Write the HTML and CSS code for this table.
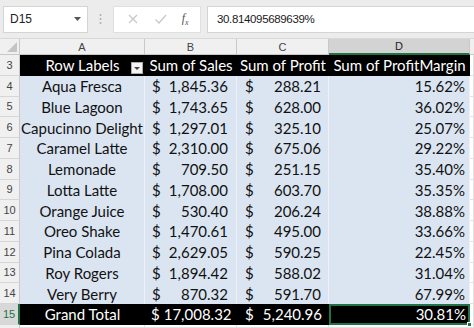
FILE: index.html
```html
<!DOCTYPE html>
<html>
<head>
<meta charset="utf-8">
<link rel="stylesheet" href="styles.css">
</head>
<body>
<div class="app">
  <div class="fbar">
    <div class="namebox"><span class="ref">D15</span><svg class="nb-arrow" width="7" height="4" viewBox="0 0 7 4"><path d="M0 0h7L3.5 4z" fill="#555"/></svg></div>
    <div class="dots"><svg width="3" height="12" viewBox="0 0 3 12"><circle cx="1.5" cy="2" r="1" fill="#b0b0b0"/><circle cx="1.5" cy="6" r="1" fill="#b0b0b0"/><circle cx="1.5" cy="10" r="1" fill="#b0b0b0"/></svg></div>
    <div class="fnbox">
      <svg class="ic" width="12" height="12" viewBox="0 0 12 12"><path d="M2 2l8 8M10 2l-8 8" stroke="#c8c8c8" stroke-width="1.3" fill="none"/></svg>
      <svg class="ic" width="13" height="12" viewBox="0 0 13 12"><path d="M1.5 6.5l3.5 3.5 7-8" stroke="#c8c8c8" stroke-width="1.3" fill="none"/></svg>
      <span class="fx">f<sub>x</sub></span>
    </div>
    <div class="input">30.814095689639%</div>
  </div>
  <div class="sheet">
    <div class="corner"><svg width="10" height="10" viewBox="0 0 10 10"><path d="M10 0V10H0z" fill="#c4c4c4"/></svg></div>
    <div class="ch">A</div><div class="ch">B</div><div class="ch">C</div><div class="ch sel">D</div><div class="ch fill"></div>

    <div class="rh">3</div>
    <div class="hd ca">Row Labels<span class="dd"><svg width="6" height="3" viewBox="0 0 6 3"><path d="M0 0h6L3 3z" fill="#444"/></svg></span></div>
    <div class="hd">Sum of Sales</div>
    <div class="hd">Sum of Profit</div>
    <div class="hd">Sum of ProfitMargin</div>
    <div class="blank"></div>

    <div class="rh">4</div><div class="c ca">Aqua Fresca</div><div class="c m"><span>$</span><span>1,845.36</span></div><div class="c m mc"><span>$</span><span>288.21</span></div><div class="c cd">15.62%</div><div class="blank"></div>
    <div class="rh">5</div><div class="c ca">Blue Lagoon</div><div class="c m"><span>$</span><span>1,743.65</span></div><div class="c m mc"><span>$</span><span>628.00</span></div><div class="c cd">36.02%</div><div class="blank"></div>
    <div class="rh">6</div><div class="c ca">Capucinno Delight</div><div class="c m"><span>$</span><span>1,297.01</span></div><div class="c m mc"><span>$</span><span>325.10</span></div><div class="c cd">25.07%</div><div class="blank"></div>
    <div class="rh">7</div><div class="c ca">Caramel Latte</div><div class="c m"><span>$</span><span>2,310.00</span></div><div class="c m mc"><span>$</span><span>675.06</span></div><div class="c cd">29.22%</div><div class="blank"></div>
    <div class="rh">8</div><div class="c ca">Lemonade</div><div class="c m"><span>$</span><span>709.50</span></div><div class="c m mc"><span>$</span><span>251.15</span></div><div class="c cd">35.40%</div><div class="blank"></div>
    <div class="rh">9</div><div class="c ca">Lotta Latte</div><div class="c m"><span>$</span><span>1,708.00</span></div><div class="c m mc"><span>$</span><span>603.70</span></div><div class="c cd">35.35%</div><div class="blank"></div>
    <div class="rh">10</div><div class="c ca">Orange Juice</div><div class="c m"><span>$</span><span>530.40</span></div><div class="c m mc"><span>$</span><span>206.24</span></div><div class="c cd">38.88%</div><div class="blank"></div>
    <div class="rh">11</div><div class="c ca">Oreo Shake</div><div class="c m"><span>$</span><span>1,470.61</span></div><div class="c m mc"><span>$</span><span>495.00</span></div><div class="c cd">33.66%</div><div class="blank"></div>
    <div class="rh">12</div><div class="c ca">Pina Colada</div><div class="c m"><span>$</span><span>2,629.05</span></div><div class="c m mc"><span>$</span><span>590.25</span></div><div class="c cd">22.45%</div><div class="blank"></div>
    <div class="rh">13</div><div class="c ca">Roy Rogers</div><div class="c m"><span>$</span><span>1,894.42</span></div><div class="c m mc"><span>$</span><span>588.02</span></div><div class="c cd">31.04%</div><div class="blank"></div>
    <div class="rh">14</div><div class="c ca">Very Berry</div><div class="c m"><span>$</span><span>870.32</span></div><div class="c m mc"><span>$</span><span>591.70</span></div><div class="c cd">67.99%</div><div class="blank"></div>

    <div class="rh rsel">15</div>
    <div class="t ca">Grand Total</div>
    <div class="t m tb"><span>$</span><span>17,008.32</span></div>
    <div class="t m mc"><span>$</span><span>5,240.96</span></div>
    <div class="t cd active">30.81%<span class="handle"></span></div>
    <div class="blank"></div>

    <div class="rh last"></div><div class="blank"></div><div class="blank"></div><div class="blank"></div><div class="blank"></div><div class="blank"></div>
  </div>
</div>
</body>
</html>
```
FILE: styles.css
```css
* { box-sizing: border-box; }
html, body { margin: 0; padding: 0; }
body { width: 474px; height: 328px; overflow: hidden; background: #fff; }
.app { width: 474px; height: 328px; display: flex; flex-direction: column; }

.fbar {
  height: 39px;
  background: #ececec;
  display: flex;
  align-items: center;
  padding: 0 0 0 3px;
  border-bottom: 1px solid #d8d8d8;
}
.namebox {
  width: 85px; height: 27px;
  background: #fff;
  border: 1px solid #d4d4d4;
  display: flex; align-items: center; justify-content: space-between;
  padding: 0 6px 0 6px;
  font-family: "Liberation Sans", Arial, sans-serif;
  font-size: 12px; color: #222;
}
.dots { width: 25px; display: flex; justify-content: center; }
.fnbox {
  width: 88px; height: 27px;
  background: #fff;
  border: 1px solid #e0e0e0;
  display: flex; align-items: center; justify-content: space-around;
  padding: 0 4px 0 6px;
}
.fx {
  font-family: "Liberation Serif", serif; font-style: italic;
  font-size: 12px; color: #555;
}
.fx sub { font-size: 8px; }
.input {
  flex: 1; height: 27px; margin-left: 6px;
  background: #fff;
  border: 1px solid #d4d4d4; border-right: none;
  display: flex; align-items: center;
  padding-left: 9px;
  font-family: "Liberation Sans", Arial, sans-serif;
  font-size: 11.5px; color: #1a1a1a; letter-spacing: -0.35px;
}

.sheet {
  flex: 1;
  display: grid;
  grid-template-columns: 20px 125px 92px 92px 141px 1fr;
  grid-template-rows: 16px repeat(13, 20.75px) 1fr;
  font-family: Lato, "Open Sans", sans-serif;
  font-size: 15px;
  background: #fff;
}
.corner {
  background: #f0f0f0;
  border-right: 1px solid #c8c8c8; border-bottom: 1px solid #c8c8c8;
  display: flex; align-items: flex-end; justify-content: flex-end;
  padding: 0 2px 2px 0;
}
.ch {
  background: #f0f0f0;
  border-right: 1px solid #c8c8c8; border-bottom: 1px solid #c8c8c8;
  display: flex; align-items: center; justify-content: center;
  font-family: "Liberation Sans", Arial, sans-serif;
  font-size: 11px; color: #444;
}
.ch.sel { background: #d3d3d3; border-bottom: 2px solid #217346; color: #222; }
.ch.fill { border-right: none; }
.rh {
  background: #f0f0f0;
  border-right: 1px solid #c8c8c8; border-bottom: 1px solid #d6d6d6;
  display: flex; align-items: center; justify-content: center;
  font-family: "Liberation Sans", Arial, sans-serif;
  font-size: 11px; color: #444;
}
.rh.rsel { background: #d8d8d8; color: #217346; border-right: 2px solid #217346; }
.rh.last { border-bottom: none; }
.blank { background: #fff; border-right: 1px solid #e2e2e2; border-bottom: 1px solid #e2e2e2; }

.hd {
  background: #000; color: #fff;
  display: flex; align-items: center; justify-content: center;
  white-space: nowrap;
}
.hd.ca { position: relative; }
.dd {
  position: absolute; right: 2px; top: 7px;
  width: 12px; height: 12px;
  background: #f4f4f4; border: 1px solid #aaa;
  display: flex; align-items: center; justify-content: center;
}
.c {
  background: #dbe5f1; color: #111;
  display: flex; align-items: center;
  border-right: 1px solid #eef2f8;
  white-space: nowrap;
}
.t {
  background: #000; color: #fff;
  display: flex; align-items: center;
  white-space: nowrap;
}
.ca { justify-content: center; }
.m { justify-content: space-between; padding: 0 8px 0 7px; }
.mc { padding: 0 7px 0 8px; }
.tb { justify-content: flex-start; gap: 4px; padding: 0 6px 0 6px; }
.cd { justify-content: flex-end; padding-right: 4px; }
.active { position: relative; border: 2px solid #217346; padding-right: 2px; }
.handle {
  position: absolute; right: -4px; bottom: -4px;
  width: 5px; height: 5px; background: #217346; border: 1px solid #fff;
}
```
